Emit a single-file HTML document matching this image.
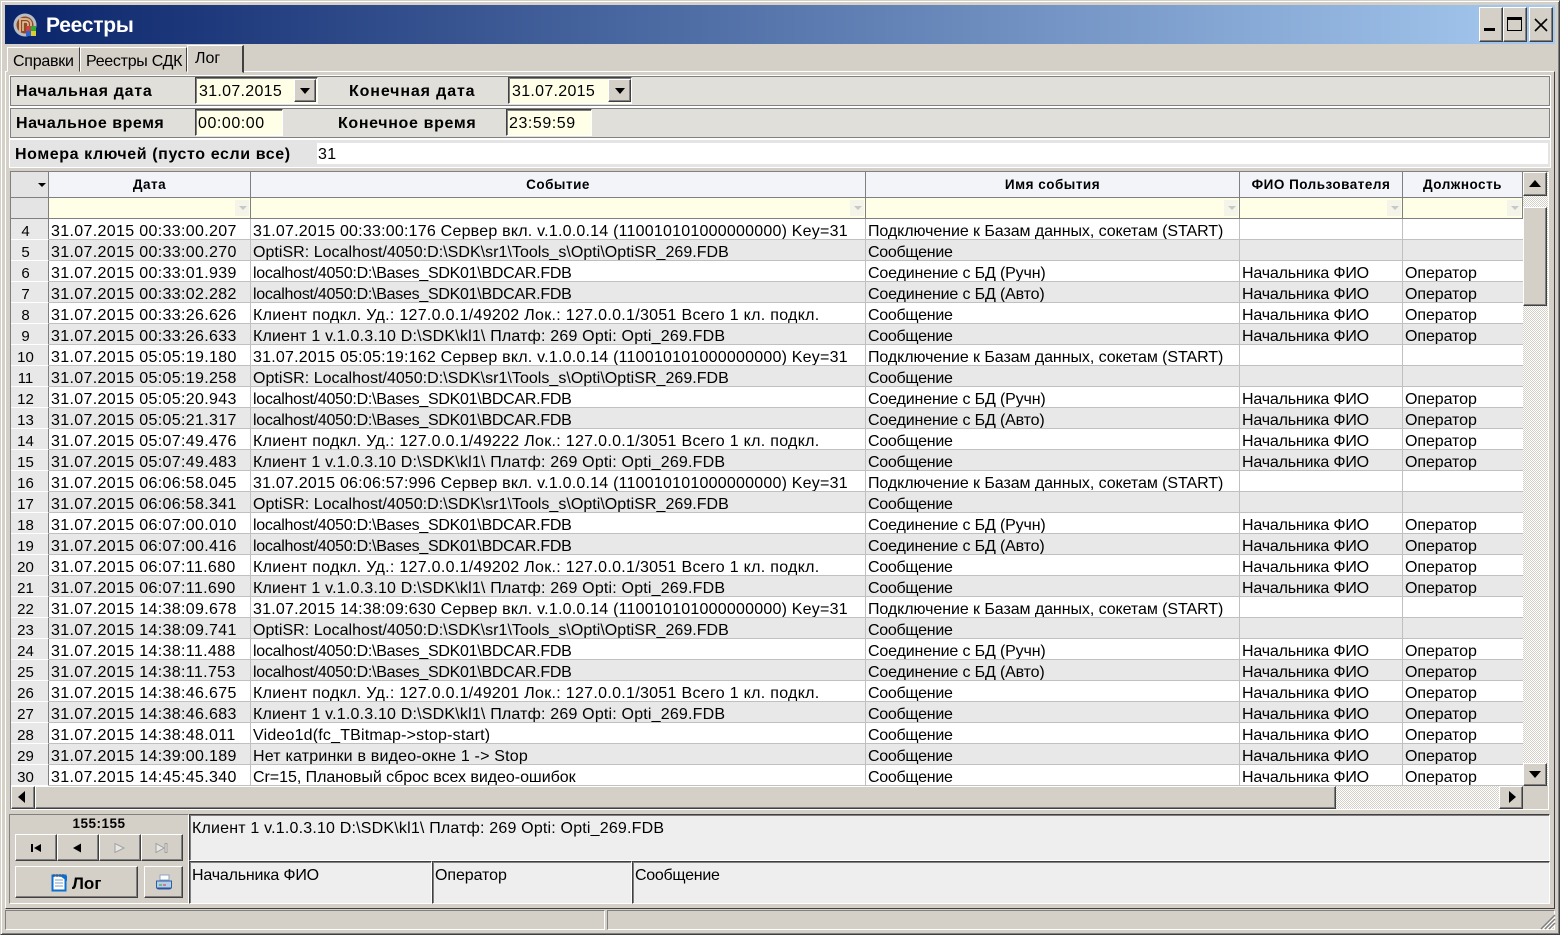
<!DOCTYPE html>
<html lang="ru"><head><meta charset="utf-8"><title>Реестры</title>
<style>
*{box-sizing:border-box}
html,body{margin:0;padding:0;width:1560px;height:935px;overflow:hidden;background:#d4d0c8}
body{position:relative;font-family:"Liberation Sans",sans-serif;font-size:16px;color:#000}
.a{position:absolute}
.raised{background:#d4d0c8;border:1px solid;border-color:#fff #404040 #404040 #fff;box-shadow:inset -1px -1px 0 #808080}
.sunken{border:1px solid;border-color:#404040 #fff #fff #404040;box-shadow:inset 1px 1px 0 #808080}
.panel{background:#e0dfda;border:1px solid #808080;outline:1px solid #fff}
.b{font-weight:bold;letter-spacing:.72px}
.t{white-space:nowrap}
.inp{background:#ffffe8}
table{position:absolute;left:11px;top:219px;border-collapse:separate;border-spacing:0;table-layout:fixed;width:1512px}
td{height:21px;padding:5px 0 0 2px;border-right:1px solid #c0c0c0;border-bottom:1px solid #c0c0c0;white-space:nowrap;overflow:hidden;line-height:15px;background:#fff}
td:first-child{background:#e8e8e8!important;text-align:center;padding:5px 8px 0 0;border-right:1px solid #808080;border-bottom:1px solid #fff;font-size:15px}
td:nth-child(2){letter-spacing:.34px}
td:nth-child(5){letter-spacing:-.19px}
td:nth-child(6){letter-spacing:-.08px;border-right:0}
tr:nth-child(even) td{background:#e8e8e8}
.s{letter-spacing:.22px}.o{letter-spacing:.03px}.l{letter-spacing:-.27px}.k{letter-spacing:.3px}.c{letter-spacing:.19px}
.p{letter-spacing:-.07px}.m{letter-spacing:-.27px}.e{letter-spacing:-.15px}.n{letter-spacing:-.04px}
.hd{top:172px;height:26px;background:#f2f4f9;border-right:1px solid #808080;border-bottom:1px solid #808080;font-weight:bold;font-size:13.5px;letter-spacing:.5px;text-align:center;line-height:25px}
.fl{top:198px;height:21px;background:#ffffe8;border-right:1px solid #808080;border-bottom:1px solid #808080}
.fl b{position:absolute;right:1px;top:2px;width:14px;height:16px;background:#f4f4e8}
.fl i{position:absolute;right:3px;top:8px;width:0;height:0;border:4px solid transparent;border-top:4px solid #c8c8c8;border-bottom:0}
.chk{background:repeating-conic-gradient(#d4d0c8 0 25%,#fff 0 50%) 0 0/2px 2px}
.tri{position:absolute;width:0;height:0}
.nav{top:834px;width:42px;height:27px}
</style></head><body>
<!-- window frame -->
<div class="a" style="left:0;top:0;width:1560px;height:935px;border:1px solid #404040;border-top-color:#d4d0c8;border-left-color:#d4d0c8;box-shadow:inset 1px 1px 0 #fff,inset -1px -1px 0 #808080"></div>
<div class="a" style="left:5px;top:5px;width:1550px;height:39px;background:linear-gradient(90deg,#0a246a,#a6caf0)"></div>
<svg class="a" style="left:13px;top:13px" width="25" height="25" viewBox="0 0 25 25"><circle cx="12" cy="12" r="11.5" fill="#b9bec6"/><circle cx="12" cy="12" r="8.5" fill="#8f4a22"/><path d="M7 19V6h6a5 5 0 0 1 5 5v8" fill="none" stroke="#d9b08a" stroke-width="2"/><path d="M10 18V9h3a2 2 0 0 1 2 2v7" fill="none" stroke="#e6c9a8" stroke-width="1.5"/><rect x="13" y="13" width="5" height="5" fill="#c44"/><rect x="18" y="13" width="5" height="5" fill="#3a3"/><rect x="13" y="18" width="5" height="5" fill="#36c"/><rect x="18" y="18" width="5" height="5" fill="#dc3"/></svg>
<div class="a t" style="left:46px;top:13px;font-size:21px;font-weight:bold;color:#fff;line-height:26px;letter-spacing:-.25px">Реестры</div>
<div class="a raised" style="left:1479px;top:7px;width:24px;height:35px"></div>
<div class="a" style="left:1484px;top:28px;width:11px;height:3px;background:#000"></div>
<div class="a raised" style="left:1503px;top:7px;width:24px;height:35px"></div>
<div class="a" style="left:1507px;top:17px;width:15px;height:14px;border:1px solid #000;border-top:3px solid #000"></div>
<div class="a raised" style="left:1529px;top:7px;width:24px;height:35px"></div>
<svg class="a" style="left:1533px;top:17px" width="16" height="16"><path d="M2 2L14 14M14 2L2 14" stroke="#000" stroke-width="1.6"/></svg>
<!-- tabs -->
<div class="a" style="left:5px;top:71px;width:1550px;height:838px;border:1px solid;border-color:#fff #404040 #404040 #fff"></div>
<div class="a t" style="left:7px;top:47px;width:73px;height:25px;border:1px solid;border-color:#fff #404040 #d4d0c8 #fff;padding:5px 0 0 5px;letter-spacing:-.25px">Справки</div>
<div class="a t" style="left:80px;top:47px;width:107px;height:25px;border:1px solid;border-color:#fff #404040 #d4d0c8 #fff;padding:5px 0 0 5px;letter-spacing:-.28px">Реестры СДК</div>
<div class="a t" style="left:187px;top:45px;width:57px;height:28px;background:#d4d0c8;border:1px solid;border-color:#fff #404040 #d4d0c8 #fff;border-right-width:2px;padding:4px 0 0 7px">Лог</div>
<!-- filters -->
<div class="a panel" style="left:10px;top:76px;width:1540px;height:30px"></div>
<div class="a panel" style="left:10px;top:108px;width:1540px;height:30px"></div>
<div class="a" style="left:10px;top:140px;width:1540px;height:27px;background:#e4e4e4;outline:1px solid #fff"></div>
<div class="a t b" style="left:16px;top:83px">Начальная дата</div>
<div class="a t b" style="left:349px;top:83px;letter-spacing:.87px">Конечная дата</div>
<div class="a t b" style="left:16px;top:115px;letter-spacing:.52px">Начальное время</div>
<div class="a t b" style="left:338px;top:115px;letter-spacing:.65px">Конечное время</div>
<div class="a t b" style="left:15px;top:146px;letter-spacing:.6px">Номера ключей (пусто если все)</div>
<div class="a inp sunken t" style="left:195px;top:77px;width:123px;height:27px;padding:5px 0 0 3px;letter-spacing:.3px">31.07.2015</div>
<div class="a raised" style="left:294px;top:79px;width:22px;height:23px"></div>
<div class="tri" style="left:300px;top:88px;border:5px solid transparent;border-top:6px solid #000;border-bottom:0"></div>
<div class="a inp sunken t" style="left:508px;top:77px;width:124px;height:27px;padding:5px 0 0 3px;letter-spacing:.3px">31.07.2015</div>
<div class="a raised" style="left:608px;top:79px;width:23px;height:23px"></div>
<div class="tri" style="left:615px;top:88px;border:5px solid transparent;border-top:6px solid #000;border-bottom:0"></div>
<div class="a inp sunken t" style="left:195px;top:109px;width:88px;height:27px;padding:5px 0 0 2px;letter-spacing:.55px">00:00:00</div>
<div class="a inp sunken t" style="left:506px;top:109px;width:86px;height:27px;padding:5px 0 0 2px;letter-spacing:.55px">23:59:59</div>
<div class="a t" style="left:317px;top:143px;width:1231px;height:21px;background:#fff;padding:3px 0 0 1px;letter-spacing:.3px">31</div>
<!-- grid -->
<div class="a" style="left:10px;top:171px;width:1539px;height:639px;background:#d4d0c8;border:1px solid;border-color:#808080 #fff #fff #808080"></div>
<div class="a hd" style="left:11px;width:38px;background:#e4e4e4"></div>
<div class="tri" style="left:38px;top:183px;border:4px solid transparent;border-top:4px solid #000;border-bottom:0"></div>
<div class="a hd" style="left:49px;width:202px">Дата</div>
<div class="a hd" style="left:251px;width:615px">Событие</div>
<div class="a hd" style="left:866px;width:374px">Имя события</div>
<div class="a hd" style="left:1240px;width:163px">ФИО Пользователя</div>
<div class="a hd" style="left:1403px;width:120px">Должность</div>
<div class="a fl" style="left:11px;width:38px;background:#e4e4e4"></div>
<div class="a fl" style="left:49px;width:202px"><b></b><i></i></div>
<div class="a fl" style="left:251px;width:615px"><b></b><i></i></div>
<div class="a fl" style="left:866px;width:374px"><b></b><i></i></div>
<div class="a fl" style="left:1240px;width:163px"><b></b><i></i></div>
<div class="a fl" style="left:1403px;width:120px"><b></b><i></i></div>
<table><colgroup><col style="width:38px"><col style="width:202px"><col style="width:615px"><col style="width:374px"><col style="width:163px"><col style="width:120px"></colgroup>
<tr><td>4</td><td>31.07.2015 00:33:00.207</td><td class="s">31.07.2015 00:33:00:176 Сервер вкл. v.1.0.0.14 (110010101000000000) Key=31</td><td class="p">Подключение к Базам данных, сокетам (START)</td><td></td><td></td></tr>
<tr><td>5</td><td>31.07.2015 00:33:00.270</td><td class="o">OptiSR: Localhost/4050:D:\SDK\sr1\Tools_s\Opti\OptiSR_269.FDB</td><td class="m">Сообщение</td><td></td><td></td></tr>
<tr><td>6</td><td>31.07.2015 00:33:01.939</td><td class="l">localhost/4050:D:\Bases_SDK01\BDCAR.FDB</td><td class="e">Соединение с БД (Ручн)</td><td>Начальника ФИО</td><td>Оператор</td></tr>
<tr><td>7</td><td>31.07.2015 00:33:02.282</td><td class="l">localhost/4050:D:\Bases_SDK01\BDCAR.FDB</td><td class="e">Соединение с БД (Авто)</td><td>Начальника ФИО</td><td>Оператор</td></tr>
<tr><td>8</td><td>31.07.2015 00:33:26.626</td><td class="k">Клиент подкл. Уд.: 127.0.0.1/49202 Лок.: 127.0.0.1/3051 Всего 1 кл. подкл.</td><td class="m">Сообщение</td><td>Начальника ФИО</td><td>Оператор</td></tr>
<tr><td>9</td><td>31.07.2015 00:33:26.633</td><td class="c">Клиент 1 v.1.0.3.10 D:\SDK\kl1\ Платф: 269 Opti: Opti_269.FDB</td><td class="m">Сообщение</td><td>Начальника ФИО</td><td>Оператор</td></tr>
<tr><td>10</td><td>31.07.2015 05:05:19.180</td><td class="s">31.07.2015 05:05:19:162 Сервер вкл. v.1.0.0.14 (110010101000000000) Key=31</td><td class="p">Подключение к Базам данных, сокетам (START)</td><td></td><td></td></tr>
<tr><td>11</td><td>31.07.2015 05:05:19.258</td><td class="o">OptiSR: Localhost/4050:D:\SDK\sr1\Tools_s\Opti\OptiSR_269.FDB</td><td class="m">Сообщение</td><td></td><td></td></tr>
<tr><td>12</td><td>31.07.2015 05:05:20.943</td><td class="l">localhost/4050:D:\Bases_SDK01\BDCAR.FDB</td><td class="e">Соединение с БД (Ручн)</td><td>Начальника ФИО</td><td>Оператор</td></tr>
<tr><td>13</td><td>31.07.2015 05:05:21.317</td><td class="l">localhost/4050:D:\Bases_SDK01\BDCAR.FDB</td><td class="e">Соединение с БД (Авто)</td><td>Начальника ФИО</td><td>Оператор</td></tr>
<tr><td>14</td><td>31.07.2015 05:07:49.476</td><td class="k">Клиент подкл. Уд.: 127.0.0.1/49222 Лок.: 127.0.0.1/3051 Всего 1 кл. подкл.</td><td class="m">Сообщение</td><td>Начальника ФИО</td><td>Оператор</td></tr>
<tr><td>15</td><td>31.07.2015 05:07:49.483</td><td class="c">Клиент 1 v.1.0.3.10 D:\SDK\kl1\ Платф: 269 Opti: Opti_269.FDB</td><td class="m">Сообщение</td><td>Начальника ФИО</td><td>Оператор</td></tr>
<tr><td>16</td><td>31.07.2015 06:06:58.045</td><td class="s">31.07.2015 06:06:57:996 Сервер вкл. v.1.0.0.14 (110010101000000000) Key=31</td><td class="p">Подключение к Базам данных, сокетам (START)</td><td></td><td></td></tr>
<tr><td>17</td><td>31.07.2015 06:06:58.341</td><td class="o">OptiSR: Localhost/4050:D:\SDK\sr1\Tools_s\Opti\OptiSR_269.FDB</td><td class="m">Сообщение</td><td></td><td></td></tr>
<tr><td>18</td><td>31.07.2015 06:07:00.010</td><td class="l">localhost/4050:D:\Bases_SDK01\BDCAR.FDB</td><td class="e">Соединение с БД (Ручн)</td><td>Начальника ФИО</td><td>Оператор</td></tr>
<tr><td>19</td><td>31.07.2015 06:07:00.416</td><td class="l">localhost/4050:D:\Bases_SDK01\BDCAR.FDB</td><td class="e">Соединение с БД (Авто)</td><td>Начальника ФИО</td><td>Оператор</td></tr>
<tr><td>20</td><td>31.07.2015 06:07:11.680</td><td class="k">Клиент подкл. Уд.: 127.0.0.1/49202 Лок.: 127.0.0.1/3051 Всего 1 кл. подкл.</td><td class="m">Сообщение</td><td>Начальника ФИО</td><td>Оператор</td></tr>
<tr><td>21</td><td>31.07.2015 06:07:11.690</td><td class="c">Клиент 1 v.1.0.3.10 D:\SDK\kl1\ Платф: 269 Opti: Opti_269.FDB</td><td class="m">Сообщение</td><td>Начальника ФИО</td><td>Оператор</td></tr>
<tr><td>22</td><td>31.07.2015 14:38:09.678</td><td class="s">31.07.2015 14:38:09:630 Сервер вкл. v.1.0.0.14 (110010101000000000) Key=31</td><td class="p">Подключение к Базам данных, сокетам (START)</td><td></td><td></td></tr>
<tr><td>23</td><td>31.07.2015 14:38:09.741</td><td class="o">OptiSR: Localhost/4050:D:\SDK\sr1\Tools_s\Opti\OptiSR_269.FDB</td><td class="m">Сообщение</td><td></td><td></td></tr>
<tr><td>24</td><td>31.07.2015 14:38:11.488</td><td class="l">localhost/4050:D:\Bases_SDK01\BDCAR.FDB</td><td class="e">Соединение с БД (Ручн)</td><td>Начальника ФИО</td><td>Оператор</td></tr>
<tr><td>25</td><td>31.07.2015 14:38:11.753</td><td class="l">localhost/4050:D:\Bases_SDK01\BDCAR.FDB</td><td class="e">Соединение с БД (Авто)</td><td>Начальника ФИО</td><td>Оператор</td></tr>
<tr><td>26</td><td>31.07.2015 14:38:46.675</td><td class="k">Клиент подкл. Уд.: 127.0.0.1/49201 Лок.: 127.0.0.1/3051 Всего 1 кл. подкл.</td><td class="m">Сообщение</td><td>Начальника ФИО</td><td>Оператор</td></tr>
<tr><td>27</td><td>31.07.2015 14:38:46.683</td><td class="c">Клиент 1 v.1.0.3.10 D:\SDK\kl1\ Платф: 269 Opti: Opti_269.FDB</td><td class="m">Сообщение</td><td>Начальника ФИО</td><td>Оператор</td></tr>
<tr><td>28</td><td>31.07.2015 14:38:48.011</td><td class="c">Video1d(fc_TBitmap-&gt;stop-start)</td><td class="m">Сообщение</td><td>Начальника ФИО</td><td>Оператор</td></tr>
<tr><td>29</td><td>31.07.2015 14:39:00.189</td><td class="c">Нет катринки в видео-окне 1 -&gt; Stop</td><td class="m">Сообщение</td><td>Начальника ФИО</td><td>Оператор</td></tr>
<tr><td>30</td><td>31.07.2015 14:45:45.340</td><td class="n">Cr=15, Плановый сброс всех видео-ошибок</td><td class="m">Сообщение</td><td>Начальника ФИО</td><td>Оператор</td></tr>
</table>
<!-- vertical scrollbar -->
<div class="a chk" style="left:1523px;top:172px;width:25px;height:613px"></div>
<div class="a raised" style="left:1523px;top:172px;width:24px;height:24px"></div>
<div class="tri" style="left:1529px;top:180px;border:6px solid transparent;border-bottom:7px solid #000;border-top:0"></div>
<div class="a raised" style="left:1523px;top:207px;width:24px;height:99px"></div>
<div class="a raised" style="left:1523px;top:763px;width:24px;height:23px"></div>
<div class="tri" style="left:1529px;top:771px;border:6px solid transparent;border-top:7px solid #000;border-bottom:0"></div>
<!-- horizontal scrollbar -->
<div class="a chk" style="left:11px;top:786px;width:1512px;height:23px"></div>
<div class="a raised" style="left:11px;top:786px;width:24px;height:23px"></div>
<div class="tri" style="left:18px;top:791px;border:6px solid transparent;border-right:7px solid #000;border-left:0"></div>
<div class="a raised" style="left:35px;top:786px;width:1301px;height:23px"></div>
<div class="a raised" style="left:1499px;top:786px;width:24px;height:23px"></div>
<div class="tri" style="left:1509px;top:791px;border:6px solid transparent;border-left:7px solid #000;border-right:0"></div>
<!-- bottom -->
<div class="a" style="left:9px;top:814px;width:180px;height:90px;border:1px solid;border-color:#808080 #fff #fff #808080"></div>
<div class="a t" style="left:9px;top:816px;width:180px;text-align:center;font-size:13.5px;font-weight:bold;letter-spacing:.5px;line-height:16px">155:155</div>
<div class="a raised nav" style="left:15px"></div><div class="a raised nav" style="left:57px"></div><div class="a raised nav" style="left:99px"></div><div class="a raised nav" style="left:141px"></div>
<svg class="a" style="left:15px;top:834px" width="168" height="27"><path d="M16 10h2v8h-2zM19 14l7-4v8z" fill="#000"/><path d="M58 14l8-4.500v9z" fill="#000"/><path d="M100 9.500v9l9-4.500z" fill="#e8e8e4" stroke="#a0a0a0"/><path d="M141 9.500v9l8-4.500zM150 9.500h2v9h-2z" fill="#e8e8e4" stroke="#a0a0a0"/></svg>
<div class="a raised" style="left:15px;top:866px;width:123px;height:32px"></div>
<svg class="a" style="left:51px;top:873px" width="18" height="19"><rect x="1.500" y="2.500" width="13" height="15" fill="#fff" stroke="#0a6fd0" stroke-width="2"/><path d="M4 7h8M4 10h8M4 13h8" stroke="#7a9cc0"/><path d="M3 1v3M6 1v3M9 1v3M12 1v3" stroke="#555"/><path d="M9 3h7v5z" fill="#0a6fd0"/></svg>
<div class="a t" style="left:72px;top:873px;font-size:17px;font-weight:bold;line-height:22px">Лог</div>
<div class="a raised" style="left:144px;top:866px;width:39px;height:32px"></div>
<svg class="a" style="left:155px;top:874px" width="18" height="17"><path d="M5 1h9v5H5z" fill="#fff" stroke="#8aa5c5"/><path d="M1.500 7h15v6a2 2 0 0 1-2 2h-11a2 2 0 0 1-2-2z" fill="#b7cde6" stroke="#2a5ea8"/><path d="M4 11h3" stroke="#2a2"/><path d="M8 11h3" stroke="#d33"/><path d="M2 14h14" stroke="#1d4f98"/></svg>
<div class="a sunken t" style="left:189px;top:814px;width:1361px;height:47px;background:#eeeeee;padding:5px 0 0 2px;letter-spacing:.19px">Клиент 1 v.1.0.3.10 D:\SDK\kl1\ Платф: 269 Opti: Opti_269.FDB</div>
<div class="a sunken t" style="left:189px;top:861px;width:243px;height:43px;background:#eeeeee;padding:5px 0 0 2px;letter-spacing:-.19px">Начальника ФИО</div>
<div class="a sunken t" style="left:432px;top:861px;width:200px;height:43px;background:#eeeeee;padding:5px 0 0 2px;letter-spacing:-.08px">Оператор</div>
<div class="a sunken t" style="left:632px;top:861px;width:918px;height:43px;background:#eeeeee;padding:5px 0 0 2px;letter-spacing:-.27px">Сообщение</div>
<!-- status bar -->
<div class="a" style="left:5px;top:910px;width:600px;height:20px;border:1px solid;border-color:#808080 #fff #fff #808080"></div>
<div class="a" style="left:607px;top:910px;width:948px;height:20px;border:1px solid;border-color:#808080 #fff #fff #808080"></div>
<svg class="a" style="left:1540px;top:914px" width="16" height="16"><path d="M15 1L1 15M15 5L5 15M15 9L9 15" stroke="#808080" stroke-width="1.500"/><path d="M15 3L3 15M15 7L7 15M15 11L11 15" stroke="#fff"/></svg>
</body></html>
